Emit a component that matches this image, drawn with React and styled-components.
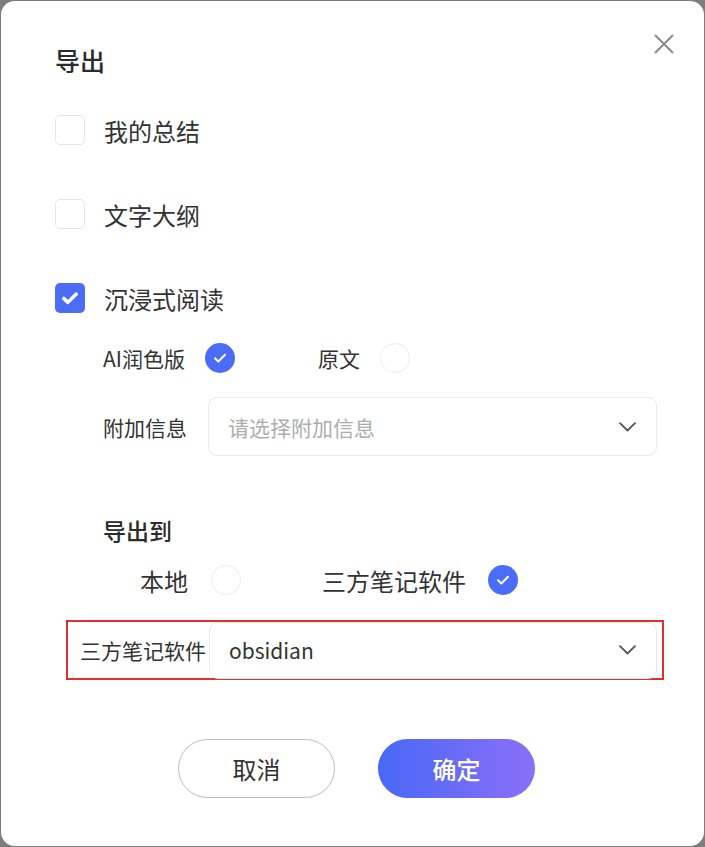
import React, { useState } from 'react';
import styled, { createGlobalStyle } from 'styled-components';

const GlobalStyle = createGlobalStyle`
  html, body {
    margin: 0;
    padding: 0;
    background: #7d7d7d;
  }
  body {
    font-family: "Noto Sans CJK SC", "Noto Sans", sans-serif;
    color: #333;
  }
`;

const BLUE = '#4a6cf6';

const Backdrop = styled.div`
  width: 705px;
  height: 847px;
  padding: 1px;
  box-sizing: border-box;
`;

const Modal = styled.div`
  position: relative;
  height: 100%;
  background: #fff;
  border-radius: 14px;
  padding: 43px 0 0 54px;
  box-sizing: border-box;
`;

const Title = styled.div`
  font-size: 25px;
  line-height: 32px;
  font-weight: 500;
  color: #2b2b2b;
`;

const CloseButton = styled.button`
  position: absolute;
  top: 32px;
  right: 29px;
  width: 22px;
  height: 22px;
  padding: 0;
  border: none;
  background: none;
  cursor: pointer;
  color: #8a8a8a;
`;

const CheckRow = styled.label`
  display: flex;
  align-items: center;
  gap: 19px;
  height: 30px;
  margin-top: ${(p) => p.$top}px;
  font-size: 24px;
  cursor: pointer;
`;

const Box = styled.span`
  width: 30px;
  height: 30px;
  box-sizing: border-box;
  border-radius: 5px;
  border: ${(p) => (p.$checked ? 'none' : '1.5px solid #e6e6e6')};
  background: ${(p) => (p.$checked ? BLUE : '#fff')};
  display: flex;
  align-items: center;
  justify-content: center;
`;

const SubSection = styled.div`
  padding-left: 48px;
`;

const OptionRow = styled.div`
  display: flex;
  align-items: center;
  height: 30px;
  margin-top: 30px;
  font-size: 21px;
`;

const Option = styled.label`
  display: flex;
  align-items: center;
  gap: ${(p) => p.$gap}px;
  width: ${(p) => p.$width}px;
  cursor: pointer;
`;

const Circle = styled.span`
  width: 30px;
  height: 30px;
  box-sizing: border-box;
  border-radius: 50%;
  border: ${(p) => (p.$checked ? 'none' : '1px solid #ececec')};
  background: ${(p) => (p.$checked ? BLUE : '#fff')};
  display: flex;
  align-items: center;
  justify-content: center;
`;

const FieldRow = styled.div`
  display: flex;
  align-items: center;
  margin-top: 24px;
  font-size: 21px;
`;

const FieldLabel = styled.span`
  width: 105px;
  flex-shrink: 0;
`;

const Select = styled.div`
  width: 449px;
  height: ${(p) => p.$height}px;
  box-sizing: border-box;
  border: 1px solid #e9e9e9;
  border-radius: 9px;
  display: flex;
  align-items: center;
  justify-content: space-between;
  padding: 0 20px 0 19px;
  font-size: 21px;
  color: ${(p) => (p.$placeholder ? '#adadad' : '#333')};
  background: #fff;
`;

const SectionTitle = styled.div`
  margin-top: 59px;
  font-size: 23px;
  line-height: 30px;
  font-weight: 500;
  color: #2b2b2b;
`;

const RadioRow = styled.div`
  display: flex;
  align-items: center;
  height: 30px;
  margin-top: 20px;
  padding-left: 37px;
  font-size: 24px;
`;

const Highlight = styled.div`
  display: flex;
  align-items: center;
  width: 598px;
  height: 60px;
  box-sizing: border-box;
  margin: 25px 0 0 11px;
  border: 2px solid #d9342b;
  padding: 0 5px 0 12px;
  font-size: 21px;
`;

const HighlightLabel = styled.span`
  width: 129px;
  flex-shrink: 0;
`;

const Footer = styled.div`
  display: flex;
  justify-content: center;
  gap: 43px;
  margin: 59px 0 0 -54px;
  padding-left: 8px;
`;

const Button = styled.button`
  width: 157px;
  height: 59px;
  border-radius: 30px;
  font-family: inherit;
  font-size: 24px;
  cursor: pointer;
  border: ${(p) => (p.$primary ? 'none' : '1px solid #bcbcbc')};
  color: ${(p) => (p.$primary ? '#fff' : '#333')};
  font-weight: ${(p) => (p.$primary ? 500 : 400)};
  background: ${(p) =>
    p.$primary ? 'linear-gradient(90deg, #4868f6 0%, #8b6ff8 100%)' : '#fff'};
`;

const Tick = ({ size = 16, width = 3 }) => (
  <svg width={size} height={size} viewBox="0 0 16 16" fill="none">
    <path
      d="M3 8.3l3.3 3.2L13 4.8"
      stroke="#fff"
      strokeWidth={width}
      strokeLinecap="round"
      strokeLinejoin="round"
    />
  </svg>
);

const Chevron = () => (
  <svg width="17" height="10" viewBox="0 0 17 10" fill="none">
    <path d="M1 1.2l7.5 7.3L16 1.2" stroke="#555" strokeWidth="1.8" strokeLinecap="round" strokeLinejoin="round" />
  </svg>
);

export default function App() {
  const [checks, setChecks] = useState({ summary: false, outline: false, reading: true });
  const [version, setVersion] = useState('ai');
  const [target, setTarget] = useState('third');

  const toggle = (key) => setChecks((c) => ({ ...c, [key]: !c[key] }));

  return (
    <>
      <GlobalStyle />
      <Backdrop>
        <Modal>
          <Title>导出</Title>
          <CloseButton aria-label="关闭">
            <svg width="22" height="22" viewBox="0 0 22 22">
              <path d="M2 2l18 18M20 2L2 20" stroke="currentColor" strokeWidth="2" />
            </svg>
          </CloseButton>

          <CheckRow $top={39} onClick={() => toggle('summary')}>
            <Box $checked={checks.summary}>{checks.summary && <Tick size={20} width={2.8} />}</Box>
            我的总结
          </CheckRow>
          <CheckRow $top={54} onClick={() => toggle('outline')}>
            <Box $checked={checks.outline}>{checks.outline && <Tick size={20} width={2.8} />}</Box>
            文字大纲
          </CheckRow>
          <CheckRow $top={54} onClick={() => toggle('reading')}>
            <Box $checked={checks.reading}>{checks.reading && <Tick size={20} width={2.8} />}</Box>
            沉浸式阅读
          </CheckRow>

          <SubSection>
            <OptionRow>
              <Option $gap={20} $width={215} onClick={() => setVersion('ai')}>
                AI润色版
                <Circle $checked={version === 'ai'}>{version === 'ai' && <Tick size={16} width={2} />}</Circle>
              </Option>
              <Option $gap={20} onClick={() => setVersion('raw')}>
                原文
                <Circle $checked={version === 'raw'}>{version === 'raw' && <Tick size={16} width={2} />}</Circle>
              </Option>
            </OptionRow>

            <FieldRow>
              <FieldLabel>附加信息</FieldLabel>
              <Select $height={59} $placeholder>
                请选择附加信息
                <Chevron />
              </Select>
            </FieldRow>

            <SectionTitle>导出到</SectionTitle>
            <RadioRow>
              <Option $gap={23} $width={182} onClick={() => setTarget('local')}>
                本地
                <Circle $checked={target === 'local'}>{target === 'local' && <Tick size={16} width={2} />}</Circle>
              </Option>
              <Option $gap={22} onClick={() => setTarget('third')}>
                三方笔记软件
                <Circle $checked={target === 'third'}>{target === 'third' && <Tick size={16} width={2} />}</Circle>
              </Option>
            </RadioRow>
          </SubSection>

          <Highlight>
            <HighlightLabel>三方笔记软件</HighlightLabel>
            <Select $height={57}>
              obsidian
              <Chevron />
            </Select>
          </Highlight>

          <Footer>
            <Button>取消</Button>
            <Button $primary>确定</Button>
          </Footer>
        </Modal>
      </Backdrop>
    </>
  );
}
